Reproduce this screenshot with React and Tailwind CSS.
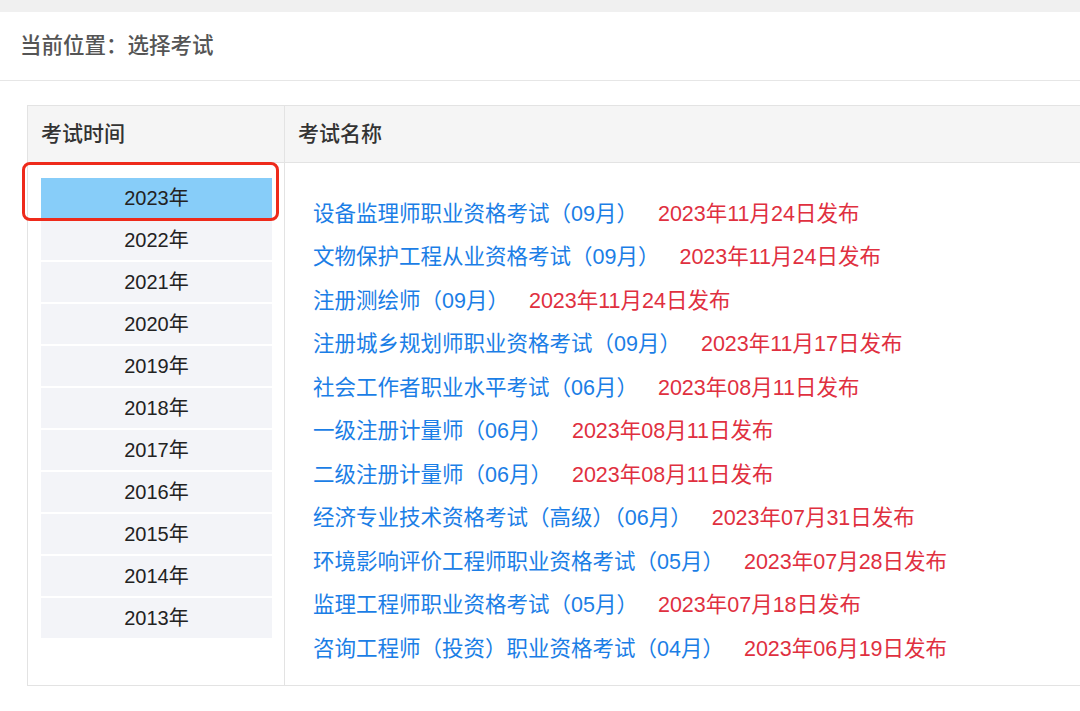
const years = ["2023","2022","2021","2020","2019","2018","2017","2016","2015","2014","2013"];
const items = [
["设备监理师职业资格考试（09月）","2023年11月24日发布"],
["文物保护工程从业资格考试（09月）","2023年11月24日发布"],
["注册测绘师（09月）","2023年11月24日发布"],
["注册城乡规划师职业资格考试（09月）","2023年11月17日发布"],
["社会工作者职业水平考试（06月）","2023年08月11日发布"],
["一级注册计量师（06月）","2023年08月11日发布"],
["二级注册计量师（06月）","2023年08月11日发布"],
["经济专业技术资格考试（高级）（06月）","2023年07月31日发布"],
["环境影响评价工程师职业资格考试（05月）","2023年07月28日发布"],
["监理工程师职业资格考试（05月）","2023年07月18日发布"],
["咨询工程师（投资）职业资格考试（04月）","2023年06月19日发布"],
];
export default function App(){
  return (
    <div className="w-[1080px] h-[711px] bg-[#f0f0f0] overflow-hidden" style={{fontFamily:'"Helvetica Neue","Liberation Sans","Noto Sans CJK SC",sans-serif'}}>
      <div className="mt-[12px] bg-white h-[699px]">
        <div className="h-[69px] border-b border-[#e6e6e6] flex items-center pl-[20px] text-[21.5px] text-[#555] font-medium">当前位置：选择考试</div>
        <div className="ml-[27px] mt-[24px] w-[1060px] border border-[#e3e3e3] flex h-[581px]">
          <div className="w-[257px] border-r border-[#e3e3e3] flex flex-col">
            <div className="h-[57px] bg-[#f5f5f5] border-b border-[#e3e3e3] flex items-center pl-[13px] text-[21px] font-medium text-[#333]">考试时间</div>
            <div className="pt-[15px] pl-[13px] pr-[12px] flex flex-col relative">
              {years.map((y,i)=>(
                <div key={y} className={`h-[40px] mb-[2px] flex items-center justify-center text-[20px] text-[#222] ${i===0?'bg-[#87cdf9]':'bg-[#f3f4f8]'}`}>{y}年</div>
              ))}
              <div className="absolute left-[-6px] top-[-1px] w-[257px] h-[59px] border-[3px] border-[#ee2a1b] rounded-[8px]"></div>
            </div>
          </div>
          <div className="flex-1 flex flex-col">
            <div className="h-[57px] bg-[#f5f5f5] border-b border-[#e3e3e3] flex items-center pl-[13px] text-[21px] font-medium text-[#333]">考试名称</div>
            <div className="pt-[29px] pl-[28px] flex flex-col">
              {items.map(([n,d])=>(
                <div key={n} className="h-[43.5px] flex items-center text-[21.5px] whitespace-nowrap">
                  <span className="text-[#1b7ee6]">{n}</span>
                  <span className="ml-[20px] text-[#e0303f]">{d}</span>
                </div>
              ))}
            </div>
          </div>
        </div>
      </div>
    </div>
  );
}
